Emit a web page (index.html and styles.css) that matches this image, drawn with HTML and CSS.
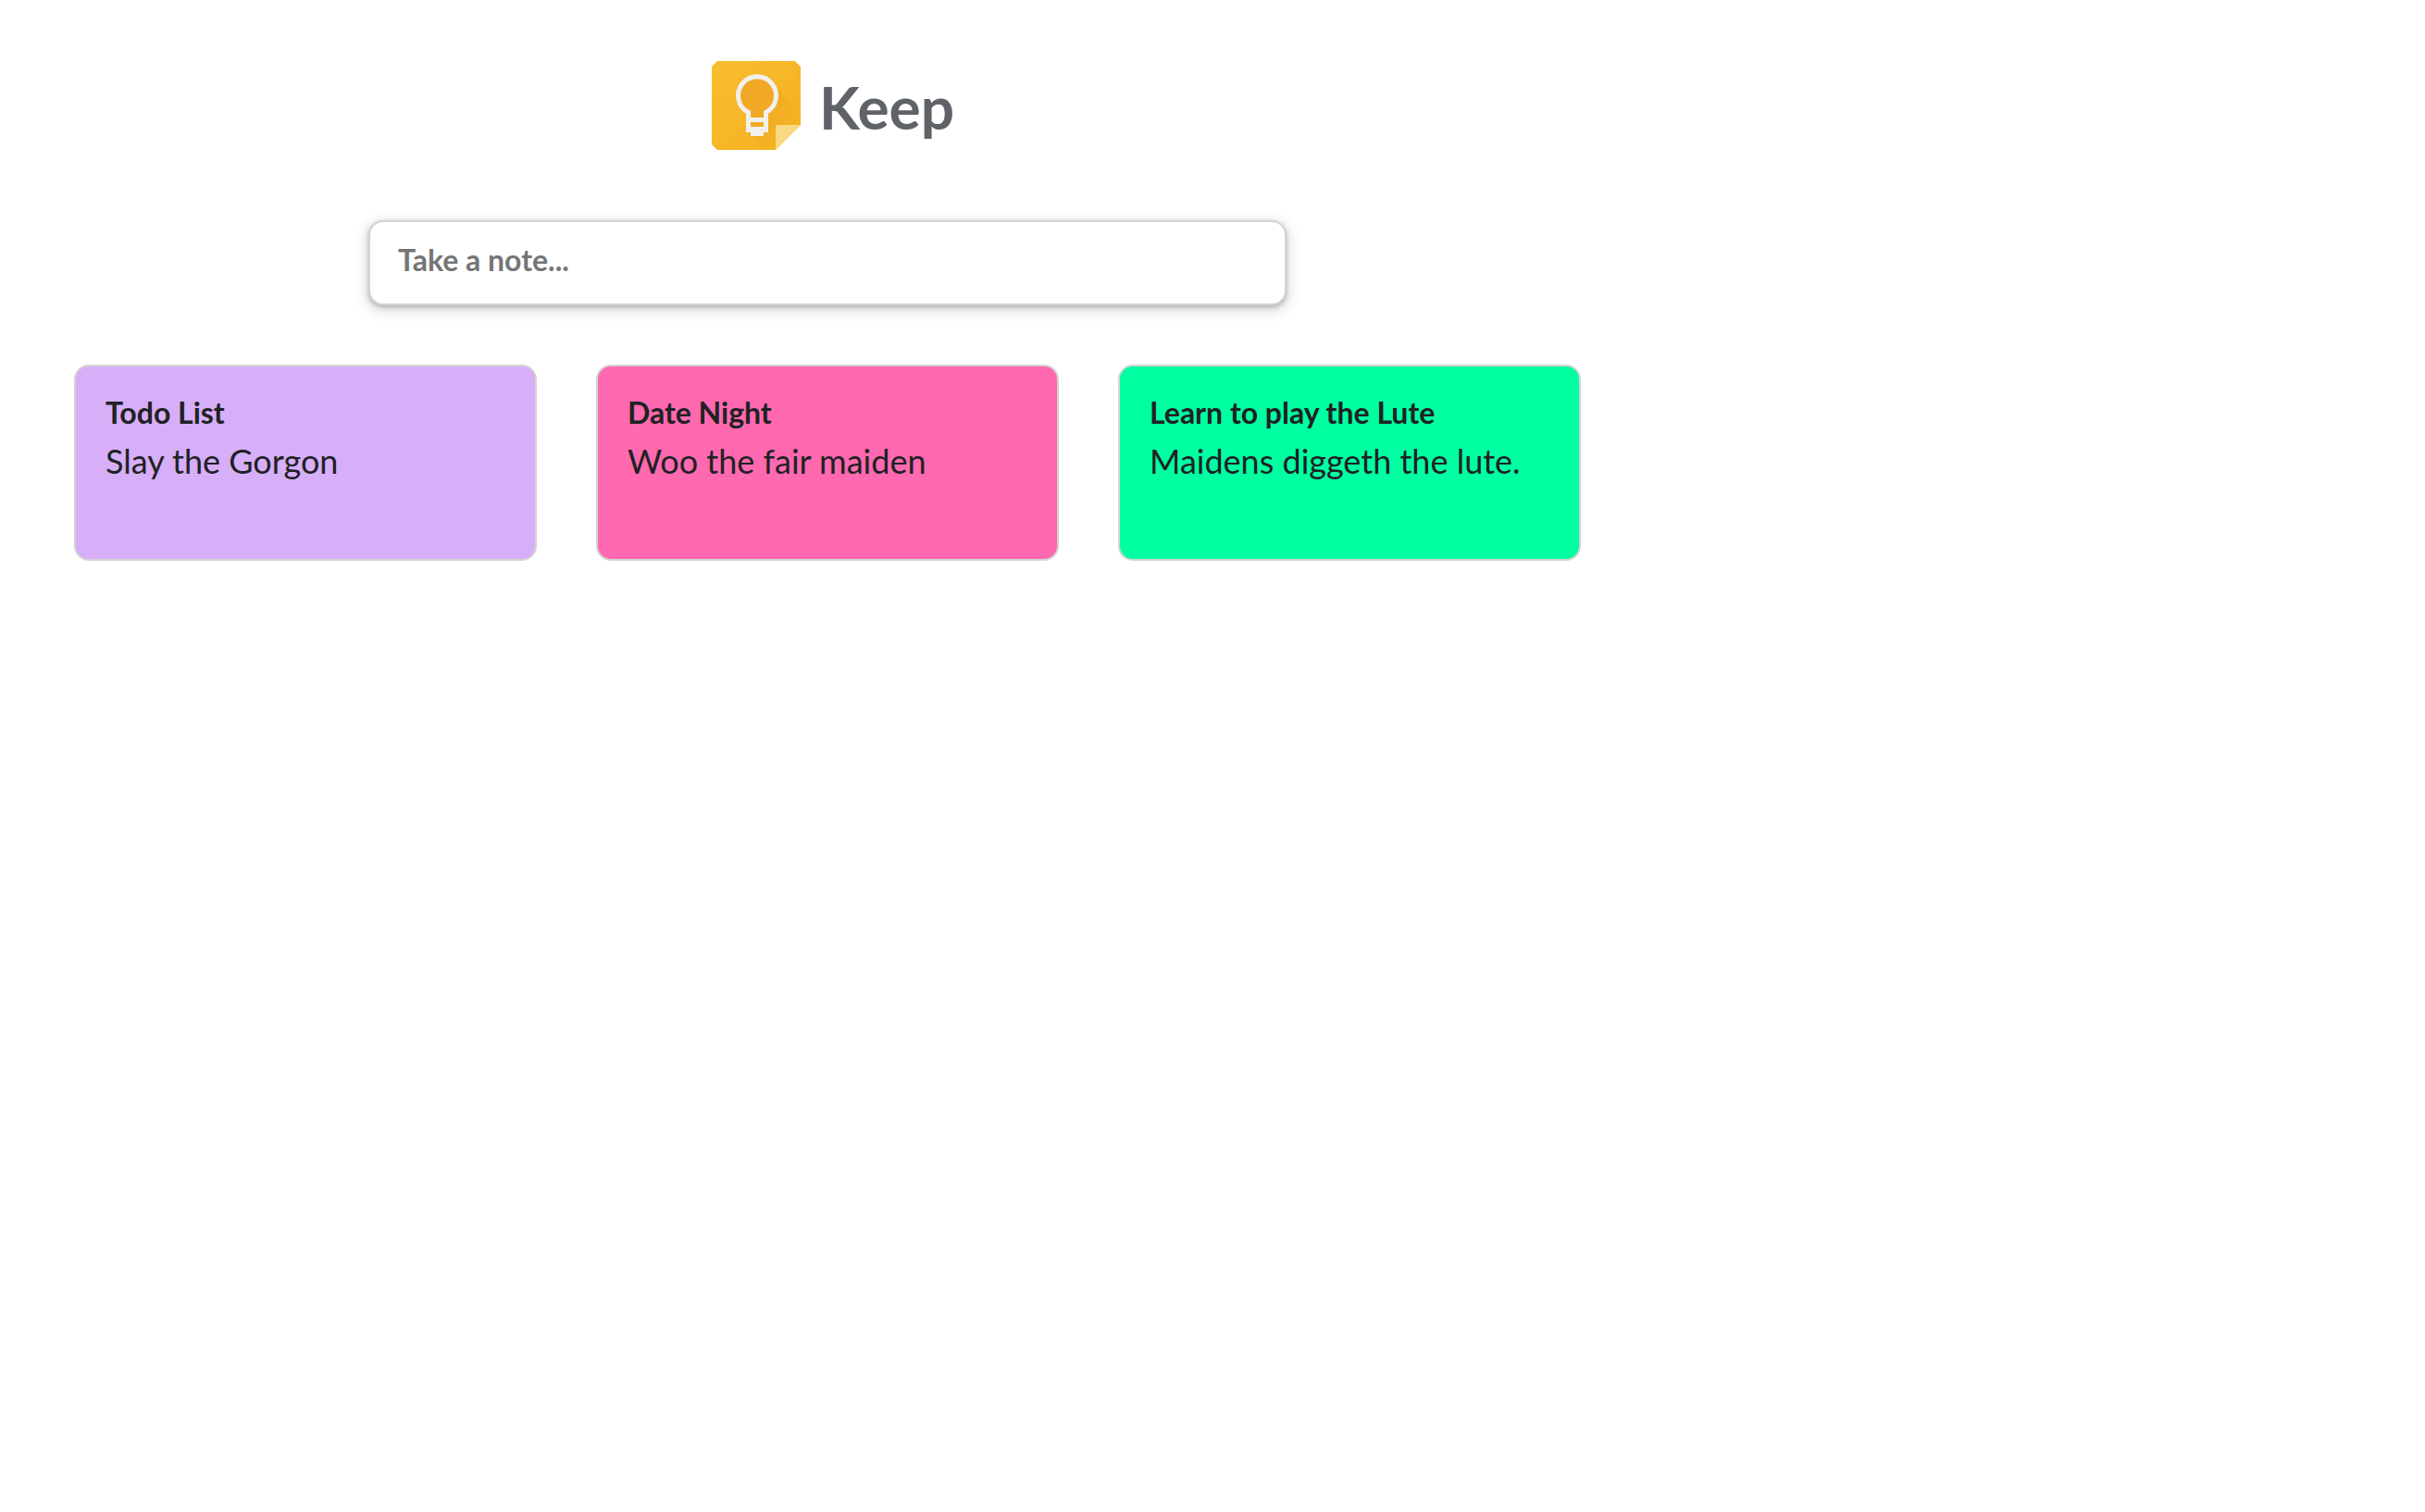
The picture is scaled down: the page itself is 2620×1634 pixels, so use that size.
FILE: index.html
```html
<!DOCTYPE html>
<html lang="en">
<head>
<meta charset="utf-8">
<title>Keep</title>
<link rel="stylesheet" href="styles.css">
</head>
<body>
<div class="app">
  <header class="header">
    <svg class="logo" viewBox="0 0 96 96" aria-hidden="true">
      <defs>
        <linearGradient id="paper" x1="0" y1="0" x2="1" y2="1">
          <stop offset="0" stop-color="#f8bd30"/>
          <stop offset="1" stop-color="#f4b020"/>
        </linearGradient>
        <linearGradient id="shade" x1="0" y1="0" x2="1" y2="1">
          <stop offset="0.3" stop-color="#e89b1c" stop-opacity="0.5"/>
          <stop offset="0.8" stop-color="#f0a81f" stop-opacity="0"/>
        </linearGradient>
      </defs>
      <path fill="url(#paper)" d="M6 0H90L96 6V69L69 96H6L0 90V6Z"/>
      <path fill="url(#shade)" d="M63 22L96 55V69L69 96L40 80V68Z"/>
      <path fill="#fbd983" d="M96 69H71Q69 69 69 71V96Z"/>
      <path fill="#f1a926" d="M39 60V57A20 20 0 1 1 58 57V60Z"/>
      <path fill="none" stroke="#f1f0ec" stroke-width="5" d="M39.500 75V55.500A20.500 20.500 0 1 1 58.500 55.500V75"/>
      <path fill="#f1f0ec" d="M37 61H61V66H37ZM37 71H61V77H56V81H42V77H37Z"/>
    </svg>
    <h1 class="brand">Keep</h1>
  </header>
  <form class="note-form">
    <input class="note-input" type="text" placeholder="Take a note..." aria-label="Take a note">
  </form>
  <main class="notes">
    <article class="note note-purple">
      <h2 class="note-title">Todo List</h2>
      <p class="note-text">Slay the Gorgon</p>
    </article>
    <article class="note note-pink">
      <h2 class="note-title">Date Night</h2>
      <p class="note-text">Woo the fair maiden</p>
    </article>
    <article class="note note-green">
      <h2 class="note-title">Learn to play the Lute</h2>
      <p class="note-text">Maidens diggeth the lute.</p>
    </article>
  </main>
</div>
</body>
</html>
```

FILE: styles.css
```css
* {
  box-sizing: border-box;
}

body {
  margin: 0;
  background: #fff;
  color: #202124;
  font-family: Lato, "Open Sans", sans-serif;
}

h1, h2, p {
  margin: 0;
}

.app {
  max-width: 1788px;
  padding: 66px 80px;
}

.header {
  display: flex;
  align-items: center;
  justify-content: center;
  gap: 20px;
  padding-left: 12px;
}

.logo {
  width: 96px;
  height: 96px;
}

.brand {
  padding-top: 4px;
  color: #5f6368;
  font-size: 64px;
  font-weight: 700;
  line-height: 92px;
}

.note-form {
  max-width: 992px;
  margin: 76px auto 64px;
}

.note-input {
  display: block;
  width: 100%;
  height: 92px;
  padding: 0 30px 8px;
  border: 2px solid #d3d3d3;
  border-radius: 16px;
  box-shadow: 0 2px 4px rgba(60, 64, 67, 0.3), 0 4px 12px 4px rgba(60, 64, 67, 0.15);
  background: #fff;
  font-family: inherit;
  font-size: 32px;
  font-weight: 700;
}

.note-input::placeholder {
  color: #757575;
  opacity: 1;
}

.notes {
  display: grid;
  grid-template-columns: repeat(3, 1fr);
  gap: 64px;
}

.note {
  min-height: 212px;
  padding: 30px 32px;
  border: 2px solid #d3d3d3;
  border-radius: 16px;
}

.note-purple {
  background: #d7aef8;
}

.note-pink {
  background: #ff69af;
}

.note-green {
  background: #00ffa1;
}

.note-title {
  font-size: 32px;
  font-weight: 700;
  line-height: 40px;
}

.note-text {
  padding-top: 8px;
  font-size: 36px;
  line-height: 48px;
}
```
